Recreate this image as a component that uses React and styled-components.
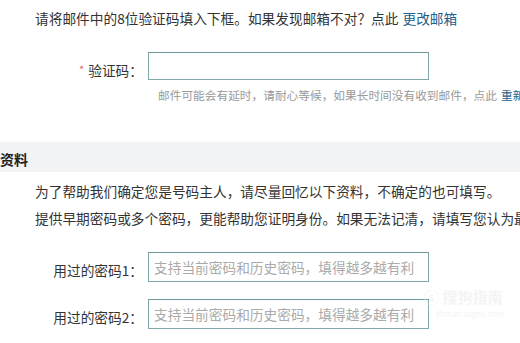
import styled, { createGlobalStyle } from 'styled-components';

const Global = createGlobalStyle`
    html, body {
        margin: 0;
        padding: 0;
        background: #fff;
    }
    body {
        font-family: "Noto Sans CJK SC", "Liberation Sans", sans-serif;
        color: #333;
    }
`

const Page = styled.div`
    width: 520px;
    height: 343px;
    overflow: hidden;
    position: relative;
    font-size: 13.7px;
`
const Notice = styled.div`
    margin-top: 8px;
    padding-left: 35px;
    line-height: 20px;
    white-space: nowrap;
`
const Link = styled.a`
    color: #235f8c;
    text-decoration: none;
    margin-left: 4px;
`
const FieldRow = styled.div`
    display: flex;
    align-items: flex-start;
    margin-top: ${props => props.$top}px;
`
const Label = styled.label`
    box-sizing: border-box;
    width: 148px;
    height: ${props => props.$h}px;
    flex-shrink: 0;
    text-align: right;
    padding-right: 5px;
    padding-top: 6px;
    line-height: ${props => props.$h - 6}px;
    white-space: nowrap;
`
const Star = styled.span`
    color: #e06565;
    font-size: 11px;
    margin-right: 4px;
    vertical-align: 2px;
`
const Input = styled.input`
    box-sizing: border-box;
    width: 281px;
    height: ${props => props.$h}px;
    margin: 0;
    padding: 0 5px;
    border: 1px solid #7fa8a8;
    border-top-color: #6e9a9a;
    outline: none;
    font-family: inherit;
    font-size: 13.7px;
    color: #333;
    background: #fff;
    &::placeholder {
        color: #aaa;
    }
`
const Hint = styled.div`
    margin-top: 7px;
    padding-left: 158px;
    font-size: 11.7px;
    line-height: 16px;
    color: #999;
    white-space: nowrap;
`
const Section = styled.div`
    margin-top: 39px;
    height: 30px;
    background: #f1f3f5;
    font-weight: bold;
    font-size: 14px;
    line-height: 30px;
    padding-top: 2px;
    box-sizing: border-box;
    color: #222;
`
const Para = styled.p`
    margin: ${props => props.$top}px 0 0;
    padding-left: 35px;
    line-height: 26px;
    white-space: nowrap;
`
const Watermark = styled.div`
    position: absolute;
    left: 424px;
    top: 288px;
    color: #f4f4f4;
    font-weight: bold;
    font-size: 15px;
    line-height: 18px;
    pointer-events: none;
    span {
        display: block;
        font-size: 8px;
        font-weight: normal;
        line-height: 10px;
        margin-left: 12px;
        margin-top: 3px;
    }
`

function App() {
    return (
        <>
            <Global />
            <Page>
                <Notice>
                    请将邮件中的8位验证码填入下框。如果发现邮箱不对？点此<Link href="#">更改邮箱</Link>
                </Notice>
                <FieldRow $top={24}>
                    <Label $h={28}><Star>*</Star>验证码：</Label>
                    <Input $h={28} type="text" />
                </FieldRow>
                <Hint>
                    邮件可能会有延时，请耐心等候，如果长时间没有收到邮件，点此<Link href="#">重新发送</Link>
                </Hint>
                <Section>资料</Section>
                <Para $top={6}>为了帮助我们确定您是号码主人，请尽量回忆以下资料，不确定的也可填写。</Para>
                <Para $top={1}>提供早期密码或多个密码，更能帮助您证明身份。如果无法记清，请填写您认为最可能的密码。</Para>
                <FieldRow $top={21}>
                    <Label $h={30}>用过的密码1：</Label>
                    <Input $h={30} type="text" placeholder="支持当前密码和历史密码，填得越多越有利" />
                </FieldRow>
                <FieldRow $top={17}>
                    <Label $h={30}>用过的密码2：</Label>
                    <Input $h={30} type="text" placeholder="支持当前密码和历史密码，填得越多越有利" />
                </FieldRow>
                <Watermark>
                    ⓢ 搜狗指南
                    <span>zhinan.sogou.com</span>
                </Watermark>
            </Page>
        </>
    );
}

export default App;
